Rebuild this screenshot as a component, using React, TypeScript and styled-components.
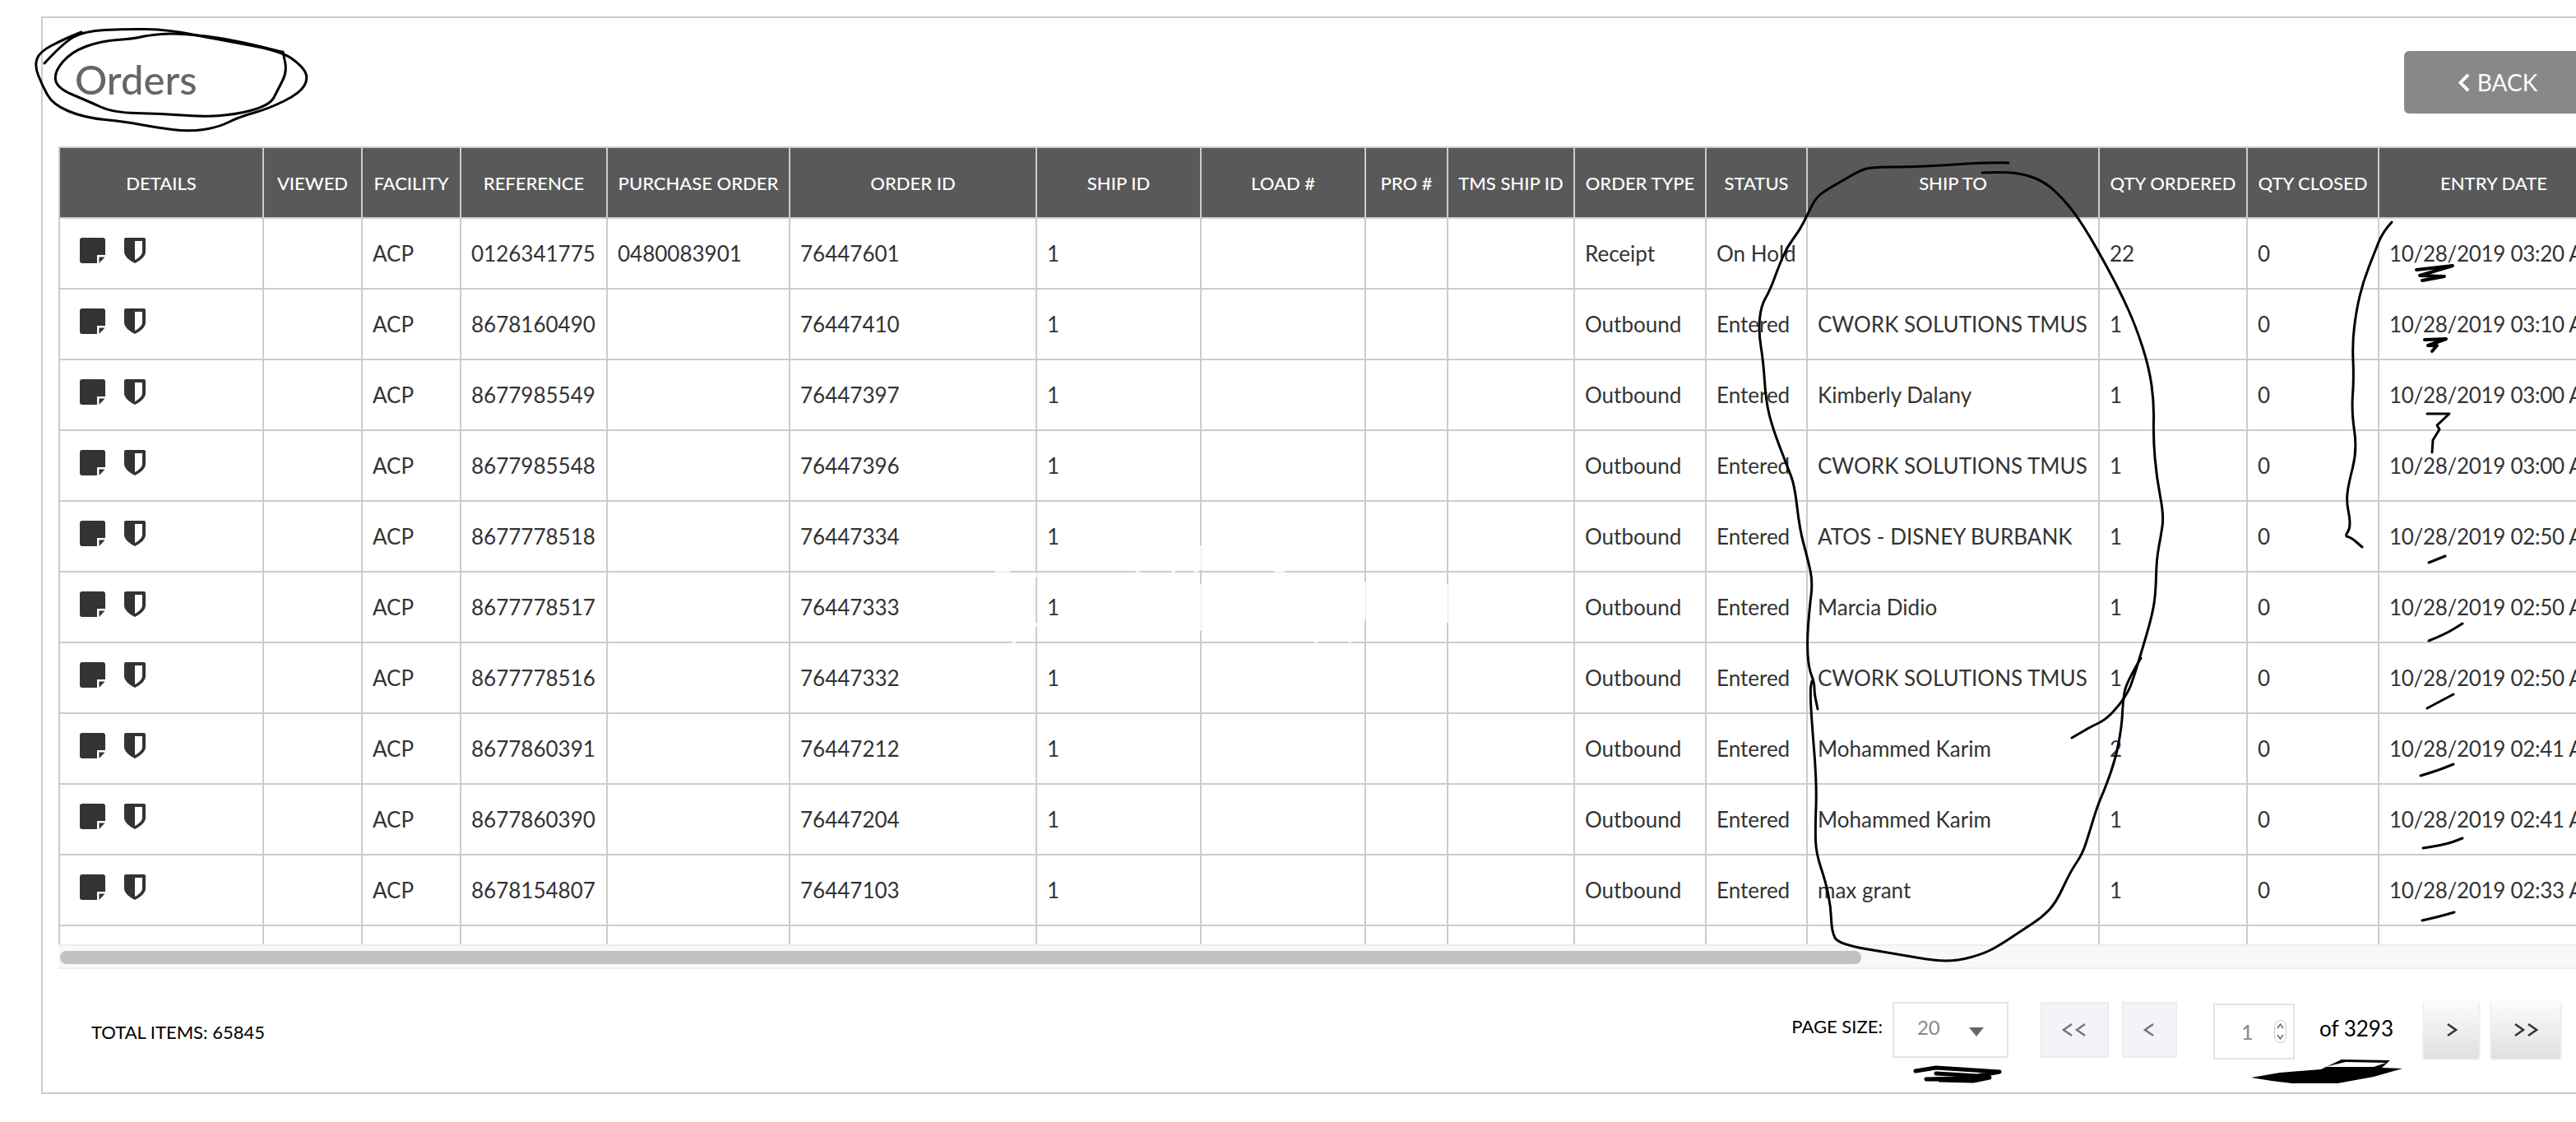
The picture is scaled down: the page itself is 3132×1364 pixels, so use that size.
import styled, { createGlobalStyle } from "styled-components"
import { FaChevronLeft } from "react-icons/fa"

const GlobalStyle = createGlobalStyle`
  html, body {
    margin: 0;
    width: 3132px;
    height: 1364px;
    overflow: hidden;
    background: #fff;
    font-family: Lato, "Open Sans", sans-serif;
  }
`

const Page = styled.div`
  position: relative;
  width: 3132px;
  height: 1364px;
  padding: 20px 0 0 50px;
  box-sizing: border-box;
  overflow: hidden;
`

const Frame = styled.div`
  width: 3300px;
  height: 1310px;
  box-sizing: border-box;
  border: 2px solid #ccc;
  padding: 0 0 0 19px;
`

const TitleRow = styled.div`
  width: 3074px;
  height: 156px;
  display: flex;
  justify-content: space-between;
  align-items: flex-start;
`

const Title = styled.h1`
  margin: 41px 0 0 20px;
  font-size: 49px;
  line-height: 66px;
  font-weight: 500;
  color: #666;
`

const BackButton = styled.button`
  margin-top: 40px;
  width: 222px;
  height: 76px;
  display: flex;
  align-items: center;
  justify-content: center;
  gap: 4px;
  border: none;
  border-radius: 6px;
  background: #888;
  color: #fff;
  font: 400 28px Lato, sans-serif;
  padding: 0;
`

const TableWrap = styled.div`
  width: 3100px;
  height: 970px;
  overflow: hidden;
`

const Table = styled.table`
  width: 3100px;
  table-layout: fixed;
  border-collapse: collapse;
`

const Th = styled.th<{ $w: number }>`
  width: ${(p) => p.$w}px;
  box-sizing: border-box;
  height: 86px;
  padding: 0;
  background: #595959;
  border: 2px solid #ccc;
  color: #fff;
  font-size: 22px;
  font-weight: 500;
  text-align: center;
  white-space: nowrap;
  overflow: hidden;
`

const Td = styled.td`
  height: 84px;
  padding: 0 0 0 12px;
  border: 2px solid #ccc;
  color: #333;
  font-size: 26px;
  white-space: nowrap;
  overflow: hidden;
`

const DateTd = styled(Td)`
  letter-spacing: -0.3px;
`

const IconCell = styled.div`
  display: flex;
  gap: 23px;
  padding: 0 0 8px 12px;
`

const ScrollTrack = styled.div`
  width: 3100px;
  height: 30px;
  box-sizing: border-box;
  background: #f8f8f8;
  border-top: 2px solid #eee;
  border-bottom: 2px solid #eee;
  padding: 6px 0 0 2px;
`

const ScrollThumb = styled.div`
  width: 2190px;
  height: 16px;
  border-radius: 8px;
  background: #c1c1c1;
`

const Footer = styled.div`
  width: 3042px;
  display: flex;
  justify-content: space-between;
  align-items: flex-start;
  padding: 40px 0 0 40px;
  box-sizing: border-box;
`

const TotalItems = styled.div`
  margin-top: 22px;
  font-size: 22px;
  line-height: 30px;
  color: #000;
`

const Pager = styled.div`
  display: flex;
  align-items: flex-start;
`

const PageSizeLabel = styled.span`
  margin: 15px 12px 0 0;
  font-size: 22px;
  line-height: 30px;
  color: #000;
`

const SelectBox = styled.div`
  width: 141px;
  height: 68px;
  box-sizing: border-box;
  border: 2px solid #e4e4e4;
  display: flex;
  justify-content: space-between;
  padding: 12px 28px 0 28px;
  margin-right: 39px;
  color: #888;
  font-size: 24px;
  line-height: 34px;
`

const Caret = styled.span`
  width: 0;
  height: 0;
  margin-top: 17px;
  border-left: 9px solid transparent;
  border-right: 9px solid transparent;
  border-top: 11px solid #666;
`

const PageButton = styled.div<{ $w: number; $mr: number; $enabled?: boolean }>`
  width: ${(p) => p.$w}px;
  height: 68px;
  box-sizing: border-box;
  margin-right: ${(p) => p.$mr}px;
  display: flex;
  align-items: center;
  justify-content: center;
  color: ${(p) => (p.$enabled ? "#333" : "#777")};
  background: ${(p) => (p.$enabled ? "linear-gradient(#fbfbfb, #e0e0e0)" : "#f3f4f8")};
  border: ${(p) => (p.$enabled ? "none" : "2px solid #ebecef")};
  box-shadow: ${(p) => (p.$enabled ? "0 1px 3px rgba(0,0,0,.2)" : "none")};
`

const PageInput = styled.div`
  width: 99px;
  height: 68px;
  margin: 2px 30px 0 0;
  box-sizing: border-box;
  border: 2px solid #e4e4e4;
  display: flex;
  align-items: center;
  padding-left: 32px;
  gap: 26px;
  color: #888;
  font-size: 25px;
`

const Spinner = styled.span`
  width: 15px;
  height: 28px;
  box-sizing: border-box;
  border: 1px solid #ccc;
  border-radius: 8px;
  display: flex;
  color: #666;
`

const PageCount = styled.span`
  margin: 14px 37px 0 0;
  font-size: 26px;
  line-height: 36px;
  color: #000;
`

const Annotations = styled.svg`
  position: absolute;
  left: 0;
  top: 0;
  pointer-events: none;
`

const DocIcon = () => (
  <svg width="31" height="31" viewBox="0 0 31 31">
    <path
      fill="#333"
      d="M3 0H28a3 3 0 0 1 3 3V21H21V31H3a3 3 0 0 1-3-3V3a3 3 0 0 1 3-3Z M23.5 23.5H30.5L23.5 31Z"
    />
  </svg>
)

const ShieldIcon = () => (
  <svg width="26" height="31" viewBox="0 0 26 31">
    <path
      fill="#333"
      d="M2 0H24a2 2 0 0 1 2 2V17C26 23 19 28 13 31C7 28 0 23 0 17V2a2 2 0 0 1 2-2Z"
    />
    <path fill="#fff" d="M13 4H22V17C22 21 17 25 13 27Z" />
  </svg>
)

const Arrows = ({ dir, count }: { dir: "l" | "r"; count: number }) => (
  <svg width={count === 2 ? 30 : 14} height="20" viewBox={`0 0 ${count === 2 ? 30 : 14} 20`}>
    {Array.from({ length: count }).map((_, i) => (
      <path
        key={i}
        fill="none"
        stroke="currentColor"
        strokeWidth="2.5"
        d={
          dir === "l"
            ? `M${12 + i * 16} 3L${2 + i * 16} 10L${12 + i * 16} 17`
            : `M${2 + i * 16} 3L${12 + i * 16} 10L${2 + i * 16} 17`
        }
      />
    ))}
  </svg>
)

// rounds off a pen stroke given as a list of points
const pen = (points: string) => {
  const n = points.trim().split(/\s+/).map((s) => s.split(",").map(Number))
  let d = `M${n[0][0]} ${n[0][1]}`
  for (let i = 1; i < n.length - 1; i++) {
    const mx = (n[i][0] + n[i + 1][0]) / 2
    const my = (n[i][1] + n[i + 1][1]) / 2
    d += `Q${n[i][0]} ${n[i][1]} ${mx} ${my}`
  }
  const last = n[n.length - 1]
  return `${d}L${last[0]} ${last[1]}`
}

const strokes = [
  "54,77 77,52 102,38 153,35 204,36 265,48 342,62 367,80 375,95 365,113 327,132 291,142 265,155 230,160 189,155 153,148 102,143 64,127 51,103 42,80 48,63 77,48 99,39",
  "342,63 286,48 214,40 179,43 163,47 122,50 87,63 66,87 69,107 107,123 138,137 194,138 265,143 327,130 339,107 349,87 344,63",
  "2442,198 2420,197 2333,203 2277,203 2262,207 2243,218 2217,233 2207,242 2197,262 2188,280 2173,300 2163,323 2152,353 2141,372 2138,403 2144,440 2147,487 2155,520 2173,567 2182,590 2188,643 2198,680 2204,707 2200,740 2197,780 2199,812 2206,830 2206,843 2210,862",
  "2410,210 2437,209 2463,212 2487,222 2507,240 2527,265 2550,303 2577,353 2597,397 2613,447 2619,490 2618,533 2622,580 2631,627 2627,653 2622,680 2621,720 2617,747 2603,795 2593,827 2588,840 2577,857 2560,875 2543,883 2519,897",
  "2603,800 2585,830 2581,853 2580,880 2573,920 2560,957 2550,980 2540,1013 2532,1038 2517,1060 2500,1097 2483,1115 2460,1130 2430,1150 2410,1160 2380,1168 2353,1168 2307,1160 2235,1148 2227,1132 2226,1103 2220,1073 2208,1037 2207,1007 2209,953 2202,867 2201,837 2203,828",
  "2908,270 2897,282 2887,307 2873,343 2865,377 2860,417 2862,460 2859,500 2866,547 2855,590 2853,610 2857,630 2857,643 2851,652 2858,653 2872,665",
  "2953,684 2973,676",
  "2953,779 2973,771 2994,758",
  "2951,861 2983,844",
  "2943,943 2963,937 2983,929",
  "2946,1031 2973,1027 2994,1019",
  "2945,1119 2963,1115 2984,1109",
]

const columns: [string, number][] = [
  ["DETAILS", 248],
  ["VIEWED", 120],
  ["FACILITY", 120],
  ["REFERENCE", 178],
  ["PURCHASE ORDER", 222],
  ["ORDER ID", 300],
  ["SHIP ID", 200],
  ["LOAD #", 200],
  ["PRO #", 100],
  ["TMS SHIP ID", 154],
  ["ORDER TYPE", 160],
  ["STATUS", 123],
  ["SHIP TO", 355],
  ["QTY ORDERED", 180],
  ["QTY CLOSED", 160],
  ["ENTRY DATE", 280],
]

const rows = [
  ["0126341775", "0480083901", "76447601", "Receipt", "On Hold", "", "22", "03:20"],
  ["8678160490", "", "76447410", "Outbound", "Entered", "CWORK SOLUTIONS TMUS", "1", "03:10"],
  ["8677985549", "", "76447397", "Outbound", "Entered", "Kimberly Dalany", "1", "03:00"],
  ["8677985548", "", "76447396", "Outbound", "Entered", "CWORK SOLUTIONS TMUS", "1", "03:00"],
  ["8677778518", "", "76447334", "Outbound", "Entered", "ATOS - DISNEY BURBANK", "1", "02:50"],
  ["8677778517", "", "76447333", "Outbound", "Entered", "Marcia Didio", "1", "02:50"],
  ["8677778516", "", "76447332", "Outbound", "Entered", "CWORK SOLUTIONS TMUS", "1", "02:50"],
  ["8677860391", "", "76447212", "Outbound", "Entered", "Mohammed Karim", "2", "02:41"],
  ["8677860390", "", "76447204", "Outbound", "Entered", "Mohammed Karim", "1", "02:41"],
  ["8678154807", "", "76447103", "Outbound", "Entered", "max grant", "1", "02:33"],
]

const App = () => {
  return (
    <Page>
      <GlobalStyle />
      <Frame>
        <TitleRow>
          <Title>Orders</Title>
          <BackButton>
            <FaChevronLeft size={25} />
            BACK
          </BackButton>
        </TitleRow>
        <TableWrap>
          <Table>
            <thead>
              <tr>
                {columns.map(([label, w]) => (
                  <Th key={label} $w={w}>
                    {label}
                  </Th>
                ))}
              </tr>
            </thead>
            <tbody>
              {rows.map((r) => (
                <tr key={r[2]}>
                  <Td>
                    <IconCell>
                      <DocIcon />
                      <ShieldIcon />
                    </IconCell>
                  </Td>
                  <Td />
                  <Td>ACP</Td>
                  <Td>{r[0]}</Td>
                  <Td>{r[1]}</Td>
                  <Td>{r[2]}</Td>
                  <Td>1</Td>
                  <Td />
                  <Td />
                  <Td />
                  <Td>{r[3]}</Td>
                  <Td>{r[4]}</Td>
                  <Td>{r[5]}</Td>
                  <Td>{r[6]}</Td>
                  <Td>0</Td>
                  <DateTd>10/28/2019 {r[7]} AM</DateTd>
                </tr>
              ))}
              <tr>
                {columns.map(([label]) => (
                  <Td key={label} />
                ))}
              </tr>
            </tbody>
          </Table>
        </TableWrap>
        <ScrollTrack>
          <ScrollThumb />
        </ScrollTrack>
        <Footer>
          <TotalItems>TOTAL ITEMS: 65845</TotalItems>
          <Pager>
            <PageSizeLabel>PAGE SIZE:</PageSizeLabel>
            <SelectBox>
              20
              <Caret />
            </SelectBox>
            <PageButton $w={83} $mr={16}>
              <Arrows dir="l" count={2} />
            </PageButton>
            <PageButton $w={67} $mr={44}>
              <Arrows dir="l" count={1} />
            </PageButton>
            <PageInput>
              1
              <Spinner>
                <svg width="13" height="26" viewBox="0 0 13 26">
                  <path
                    fill="none"
                    stroke="currentColor"
                    strokeWidth="1.4"
                    d="M3 9L6.5 4L10 9M3 17L6.5 22L10 17"
                  />
                </svg>
              </Spinner>
            </PageInput>
            <PageCount>of 3293</PageCount>
            <PageButton $w={67} $mr={15} $enabled>
              <Arrows dir="r" count={1} />
            </PageButton>
            <PageButton $w={84} $mr={0} $enabled>
              <Arrows dir="r" count={2} />
            </PageButton>
          </Pager>
        </Footer>
      </Frame>
      <Annotations width="3132" height="1364" viewBox="0 0 3132 1364">
        {/* faint white marks left over the grid lines */}
        <path
          fill="none"
          stroke="#fff"
          strokeWidth="3"
          d="M1210 694H1228M1381 694H1386M1424 694H1429M1452 694H1457M1549 694H1562M1230 780H1235M1598 780H1602M1640 780H1643M1259 697V702M1259 757V762M1459 663V693M1459 710V767M1659 707V753M1759 710V757"
        />
        <g fill="none" stroke="#000" strokeWidth="3" strokeLinejoin="round" strokeLinecap="round">
          {strokes.map((s) => (
            <path key={s} d={pen(s)} />
          ))}
          <path strokeWidth="4" d="M2938 328L2982 323L2942 335L2972 336L2945 341" />
          <path strokeWidth="4" d="M2948 413L2974 412L2952 420L2963 420L2957 427" />
          <path d="M2951 503L2978 503L2963 517L2966 522L2958 535L2957 550" />
          <path strokeWidth="5" d="M2329 1302L2354 1298L2431 1303L2404 1308L2354 1305M2342 1312L2419 1310L2399 1314L2359 1313" />
        </g>
        <path
          fill="#000"
          fillRule="evenodd"
          d="M2737 1310L2772 1304L2822 1300L2847 1288L2906 1289L2896 1298L2921 1299L2886 1309L2842 1317L2787 1317L2762 1314Z M2827 1297L2852 1291L2901 1292L2886 1297Z"
        />
      </Annotations>
    </Page>
  )
}

export default App
